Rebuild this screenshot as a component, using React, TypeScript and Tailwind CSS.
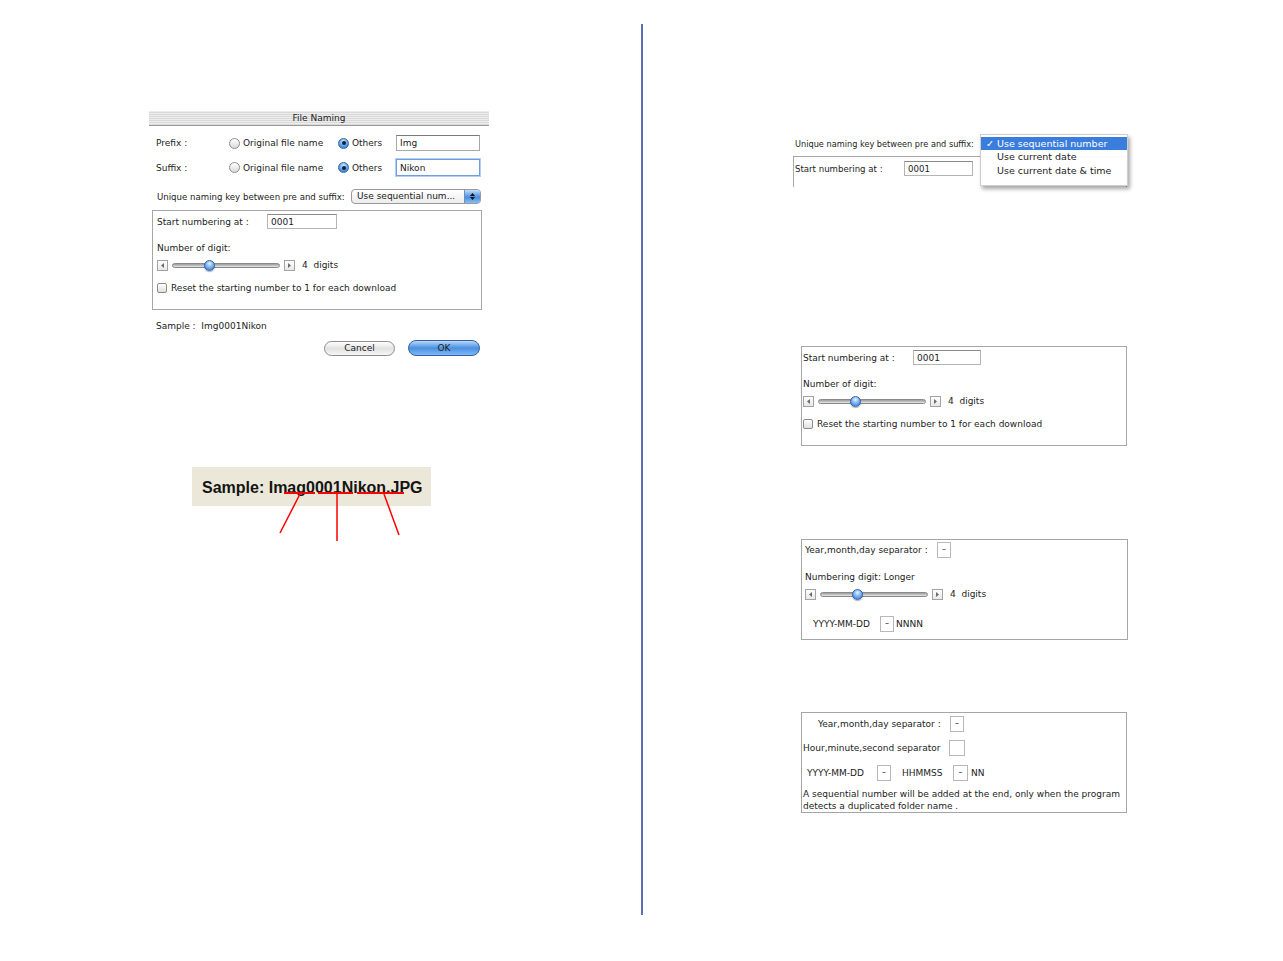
import React from "react";

// Aqua-style bits shared by the dialog and the cut-out panels
const ui = "font-['DejaVu_Sans',sans-serif] text-[9px] leading-[12px] text-[#1c1c1c] whitespace-nowrap";

const Radio = ({ on = false }: { on?: boolean }) =>
  on ? (
    <span className="flex h-[11px] w-[11px] shrink-0 items-center justify-center rounded-full border border-[#3465a8] bg-[radial-gradient(circle_at_50%_30%,#d6ebff_0%,#5c9ee8_55%,#2f6fcf_100%)]">
      <span className="h-[4px] w-[4px] rounded-full bg-[#10203c]" />
    </span>
  ) : (
    <span className="h-[11px] w-[11px] shrink-0 rounded-full border border-[#8f8f8f] bg-[linear-gradient(#ffffff,#d9d9d9)]" />
  );

const TextBox = ({ value, className }: { value: string; className: string }) => (
  <div className={`flex items-center bg-white pl-[3px] ${className}`}>{value}</div>
);

const Checkbox = () => (
  <span className="h-[10px] w-[10px] shrink-0 rounded-[2px] border border-[#8c8c8c] bg-[linear-gradient(#ffffff,#dedede)]" />
);

const Arrow = ({ right = false }: { right?: boolean }) => (
  <span className="flex h-[11px] w-[11px] shrink-0 items-center justify-center border border-[#a3a3a3] bg-[linear-gradient(#ffffff,#e8e8e8)]">
    <svg width="3" height="5" viewBox="0 0 3 5">
      <path d={right ? "M0 0L3 2.5L0 5Z" : "M3 0L0 2.5L3 5Z"} fill="#6b6b6b" />
    </svg>
  </span>
);

const DigitSlider = () => (
  <div className="flex h-[12px] items-center">
    <Arrow />
    <div className="relative ml-[4px] h-[5px] w-[108px] rounded-full border border-[#8a8a8a] bg-[linear-gradient(#9a9a9a,#e6e6e6)]">
      <span className="absolute left-[31px] top-[-4px] h-[11px] w-[11px] rounded-full border border-[#2f62ad] bg-[radial-gradient(circle_at_50%_30%,#e6f2ff_0%,#7fb4ef_45%,#2f74d3_100%)] shadow-[0_1px_1px_rgba(0,0,0,0.3)]" />
    </div>
    <span className="ml-[4px]">
      <Arrow right />
    </span>
    <span className="ml-[7px] whitespace-pre">4  digits</span>
  </div>
);

const SepBox = ({ value = "–", className = "w-[14px]" }: { value?: string; className?: string }) => (
  <span className={`flex h-[16px] shrink-0 items-center justify-center border border-[#b8b8b8] bg-white text-[8px] ${className}`}>
    {value}
  </span>
);

const NumberingBox = ({ className, field }: { className: string; field: string }) => (
  <div className={`border border-[#a6a6a6] ${className}`}>
    <div className="mt-[3px] flex h-[15px] items-center">
      <span className="w-[110px] shrink-0">Start numbering at :</span>
      <TextBox value="0001" className={`h-[15px] border border-[#b4b4b4] border-t-[#8a8a8a] ${field}`} />
    </div>
    <div className="mt-[13px] h-[12px]">Number of digit:</div>
    <div className="mt-[5px]">
      <DigitSlider />
    </div>
    <div className="mt-[11px] flex h-[12px] items-center gap-[4px]">
      <Checkbox />
      <span>Reset the starting number to 1 for each download</span>
    </div>
  </div>
);

const FileNamingDialog = () => (
  <div className={`ml-[149px] mt-[111px] h-[245px] w-[340px] bg-white ${ui}`}>
    <div className="flex h-[15px] items-center justify-center border-b border-[#9a9a9a] bg-[repeating-linear-gradient(180deg,#ededed_0px,#ededed_1px,#d9d9d9_1px,#d9d9d9_2px)] text-[#222]">
      File Naming
    </div>

    <div className="mt-[9px] flex h-[16px] items-center pl-[7px]">
      <span className="w-[73px] shrink-0">Prefix :</span>
      <span className="flex w-[109px] shrink-0 items-center gap-[3px]">
        <Radio />
        Original file name
      </span>
      <span className="flex w-[58px] shrink-0 items-center gap-[3px]">
        <Radio on />
        Others
      </span>
      <TextBox value="Img" className="h-[16px] w-[84px] border border-[#a8a8a8] border-t-[#7a7a7a]" />
    </div>

    <div className="mt-[8px] flex h-[17px] items-center pl-[7px]">
      <span className="w-[73px] shrink-0">Suffix :</span>
      <span className="flex w-[109px] shrink-0 items-center gap-[3px]">
        <Radio />
        Original file name
      </span>
      <span className="flex w-[58px] shrink-0 items-center gap-[3px]">
        <Radio on />
        Others
      </span>
      <TextBox
        value="Nikon"
        className="h-[17px] w-[84px] border border-[#6f9de0] shadow-[0_0_0_1px_#b3cff2]"
      />
    </div>

    <div className="mt-[13px] flex h-[15px] items-center pl-[8px]">
      <span className="w-[194px] shrink-0 text-[8.6px]">Unique naming key between pre and suffix:</span>
      <div className="flex h-[15px] w-[130px] overflow-hidden rounded-[4px] border border-[#9a9a9a] bg-[linear-gradient(#ffffff,#ececec)]">
        <span className="flex-1 pl-[5px] leading-[13px]">Use sequential num...</span>
        <span className="flex w-[16px] flex-col items-center justify-center gap-[1px] border-l border-[#6f8fc0] bg-[linear-gradient(#c3ddfb,#4a8ee0_55%,#86bcf2)]">
          <svg width="5" height="3" viewBox="0 0 5 3">
            <path d="M0 3L2.5 0L5 3Z" fill="#111" />
          </svg>
          <svg width="5" height="3" viewBox="0 0 5 3">
            <path d="M0 0L2.5 3L5 0Z" fill="#111" />
          </svg>
        </span>
      </div>
    </div>

    <NumberingBox className="ml-[3px] mt-[6px] h-[100px] w-[330px] pl-[4px]" field="w-[70px]" />

    <div className="mt-[10px] h-[12px] whitespace-pre pl-[7px]">Sample :  Img0001Nikon</div>

    <div className="mt-[8px] flex items-center justify-end gap-[13px] pr-[9px]">
      <button className="flex h-[15px] w-[71px] items-center justify-center rounded-full border border-[#8c8c8c] bg-[linear-gradient(#ffffff,#e2e2e2_50%,#f6f6f6)]">
        Cancel
      </button>
      <button className="flex h-[16px] w-[72px] items-center justify-center rounded-full border border-[#355f9f] bg-[linear-gradient(#b8d9fa,#4a90e2_50%,#7cb8f4)]">
        OK
      </button>
    </div>
  </div>
);

const SampleCallout = () => (
  <div className="relative ml-[192px] mt-[111px] flex h-[39px] w-[239px] items-center bg-[#ebe8d9] pl-[10px] pt-[2px] font-['Liberation_Sans',sans-serif] text-[16px] font-bold text-[#141414]">
    Sample: Imag0001Nikon.JPG
    <svg className="absolute left-0 top-0 overflow-visible" width="239" height="80" viewBox="0 0 239 80">
      <g stroke="#ff0000" fill="none">
        <path d="M92 26H123M126 26H161M165 26H212" strokeWidth="2" />
        <path d="M108 27L88 66M145 27V74M192 27L207 68" strokeWidth="1.5" />
      </g>
    </svg>
  </div>
);

const KeyMenuFigure = () => (
  <div className="relative ml-[147px] mt-[133px] h-[54px] w-[343px] whitespace-nowrap font-['DejaVu_Sans',sans-serif] text-[8.2px] leading-[12px] text-[#1c1c1c]">
    <div className="mt-[5px] h-[12px] pl-[5px]">Unique naming key between pre and suffix:</div>
    <div className="ml-[3px] mt-[6px] h-[31px] w-[334px] border border-b-0 border-[#a8a8a8] pl-[1px]">
      <div className="mt-[4px] flex h-[15px] items-center text-[8.6px]">
        <span className="w-[109px] shrink-0">Start numbering at :</span>
        <TextBox value="0001" className="h-[15px] w-[69px] border border-[#b4b4b4] border-t-[#8a8a8a]" />
      </div>
    </div>
    <div className="absolute left-[190px] top-[1px] h-[52px] w-[148px] border border-[#cfcfcf] bg-white/95 pt-[2px] text-[9.5px] leading-[14px] shadow-[2px_3px_4px_rgba(0,0,0,0.35)]">
      <div className="flex h-[13px] items-center bg-[#3b7ddd] text-white">
        <span className="w-[16px] pl-[5px]">✓</span>
        <span>Use sequential number</span>
      </div>
      <div className="pl-[16px]">Use current date</div>
      <div className="pl-[16px]">Use current date &amp; time</div>
    </div>
  </div>
);

const DateNumberPanel = () => (
  <div className={`ml-[158px] mt-[93px] h-[101px] w-[327px] border border-[#a6a6a6] pl-[3px] ${ui}`}>
    <div className="mt-[2px] flex h-[16px] items-center">
      <span className="w-[132px] shrink-0">Year,month,day separator :</span>
      <SepBox />
    </div>
    <div className="mt-[13px] h-[12px]">Numbering digit: Longer</div>
    <div className="mt-[5px]">
      <DigitSlider />
    </div>
    <div className="mt-[16px] flex h-[16px] items-center pl-[8px]">
      <span className="w-[67px] shrink-0">YYYY-MM-DD</span>
      <SepBox />
      <span className="ml-[2px]">NNNN</span>
    </div>
  </div>
);

const DateTimePanel = () => (
  <div className={`ml-[158px] mt-[72px] h-[101px] w-[326px] border border-[#a6a6a6] pl-[1px] ${ui}`}>
    <div className="mt-[3px] flex h-[16px] items-center pl-[15px]">
      <span className="w-[132px] shrink-0">Year,month,day separator :</span>
      <SepBox />
    </div>
    <div className="mt-[8px] flex h-[16px] items-center">
      <span className="w-[146px] shrink-0">Hour,minute,second separator</span>
      <SepBox value="" className="w-[16px]" />
    </div>
    <div className="mt-[9px] flex h-[16px] items-center pl-[4px]">
      <span className="w-[70px] shrink-0">YYYY-MM-DD</span>
      <SepBox />
      <span className="ml-[11px] w-[51px] shrink-0">HHMMSS</span>
      <SepBox className="w-[15px]" />
      <span className="ml-[3px]">NN</span>
    </div>
    <p className="mt-[7px]">
      A sequential number will be added at the end, only when the program
      <br />
      detects a duplicated folder name .
    </p>
  </div>
);

export default function App() {
  return (
    <div className="flex h-[961px] w-[1283px] overflow-hidden bg-white">
      <div className="flex w-[641px] shrink-0 flex-col items-start">
        <FileNamingDialog />
        <SampleCallout />
      </div>
      <div className="mt-[24px] h-[891px] w-[2px] shrink-0 bg-[#5b6eb5]" />
      <div className="flex flex-1 flex-col items-start">
        <KeyMenuFigure />
        <NumberingBox
          className={`ml-[158px] mt-[159px] h-[100px] w-[326px] pl-[1px] ${ui}`}
          field="w-[68px]"
        />
        <DateNumberPanel />
        <DateTimePanel />
      </div>
    </div>
  );
}
